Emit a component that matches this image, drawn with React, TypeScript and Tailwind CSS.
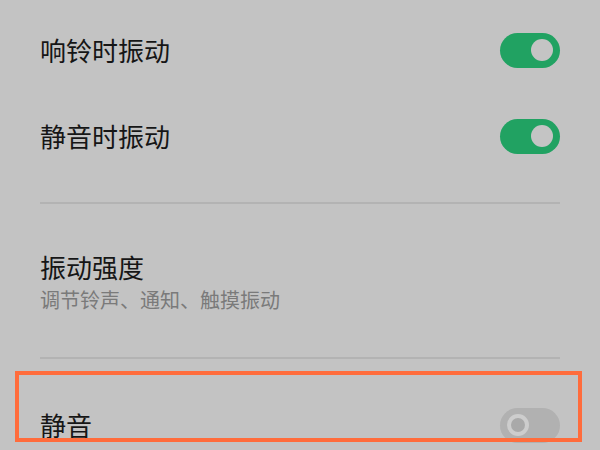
import { useState } from 'react'

function Toggle({ on }: { on: boolean }) {
  if (on) {
    return (
      <div className="w-[60px] h-[35px] rounded-full bg-[#21a262] flex items-center justify-end pr-[7px]">
        <div className="w-[22px] h-[22px] rounded-full bg-[#c4c4c4]" />
      </div>
    )
  }
  return (
    <div className="w-[60px] h-[35px] rounded-full bg-[#b1b1b1] flex items-center pl-[7px]">
      <div className="w-[22px] h-[22px] rounded-full border-[4px] border-[#cdcdcd] bg-[#a9a9a9]" />
    </div>
  )
}

export default function App() {
  const [ring, setRing] = useState(true)
  const [silent, setSilent] = useState(true)

  return (
    <main
      className="relative w-[600px] h-[450px] overflow-hidden bg-[#c3c3c3] text-[#161616]"
      style={{ fontFamily: '"Noto Sans CJK SC", "Noto Sans", sans-serif' }}
    >
      <div className="px-10 pt-[7px]">
        <div className="h-[86px] flex items-center justify-between" onClick={() => setRing(!ring)}>
          <span className="text-[26px] leading-none">响铃时振动</span>
          <Toggle on={ring} />
        </div>
        <div className="h-[86px] flex items-center justify-between" onClick={() => setSilent(!silent)}>
          <span className="text-[26px] leading-none">静音时振动</span>
          <Toggle on={silent} />
        </div>

        <div className="mt-[23px] h-[2px] bg-[#b3b3b3]" />

        <div className="pt-[50px] pb-[47px] flex flex-col">
          <span className="text-[26px] leading-[26px]">振动强度</span>
          <span className="mt-[10px] text-[20px] leading-[20px] text-[#7a7a7a]">调节铃声、通知、触摸振动</span>
        </div>

        <div className="h-[2px] bg-[#b3b3b3]" />

        <div className="h-[132px] flex items-center justify-between">
          <span className="text-[26px] leading-none">静音</span>
          <Toggle on={false} />
        </div>
      </div>

      <div className="absolute left-[15px] top-[371px] w-[567px] h-[71px] border-[4px] border-[#ff6c3c]" />
    </main>
  )
}
